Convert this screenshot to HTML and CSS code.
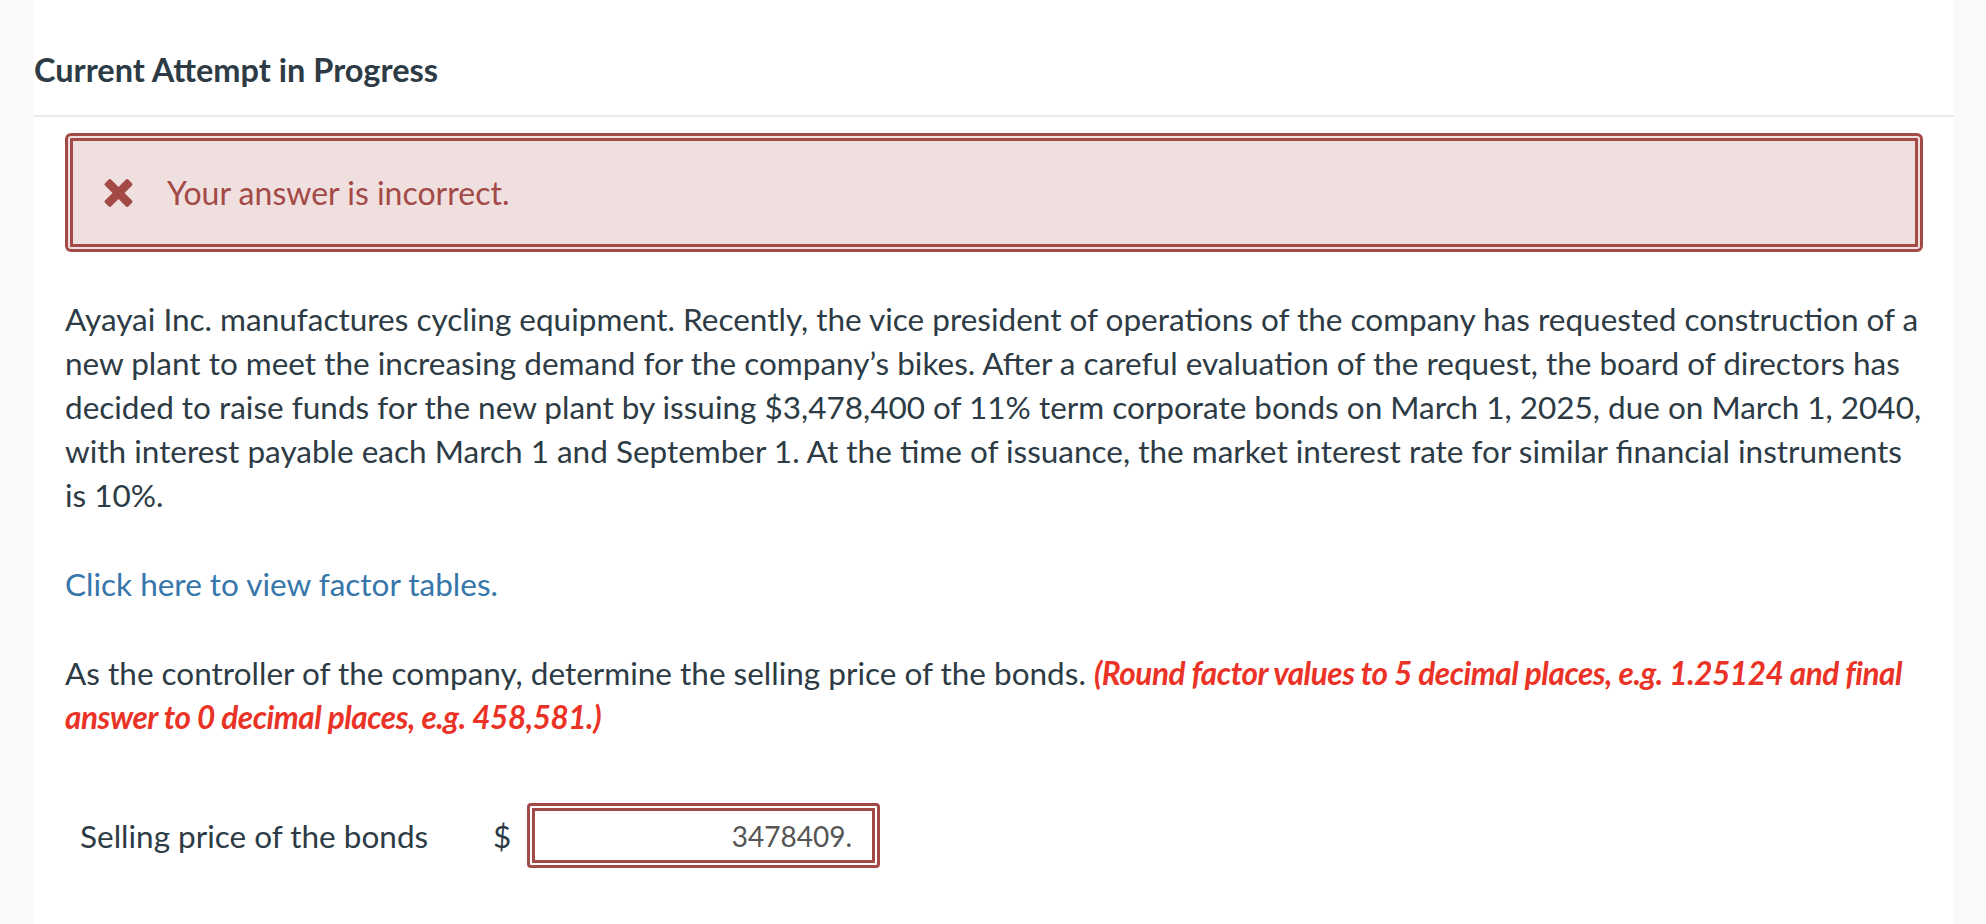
FILE: index.html
```html
<!DOCTYPE html>
<html lang="en">
<head>
<meta charset="utf-8">
<title>Current Attempt in Progress</title>
<link rel="stylesheet" href="styles.css">
</head>
<body>
<main class="page">
  <header class="attempt-header">
    <h2 class="attempt-title">Current Attempt in Progress</h2>
  </header>
  <section class="content">
    <div class="feedback">
      <svg class="feedback-icon" viewBox="0 0 29 28" aria-hidden="true">
        <rect x="-2" y="9.75" width="33" height="8.5" rx="2" transform="rotate(45 14.5 14)"></rect>
        <rect x="-2" y="9.75" width="33" height="8.5" rx="2" transform="rotate(-45 14.5 14)"></rect>
      </svg>
      <span class="feedback-text">Your answer is incorrect.</span>
    </div>

    <p class="question">Ayayai Inc. manufactures cycling equipment. Recently, the vice president of operations of the company has requested construction of a new plant to meet the increasing demand for the company’s bikes. After a careful evaluation of the request, the board of directors has decided to raise funds for the new plant by issuing $3,478,400 of 11% term corporate bonds on March 1, 2025, due on March 1, 2040, with interest payable each March 1 and September 1. At the time of issuance, the market interest rate for similar financial instruments is 10%.</p>

    <p class="question"><a class="factor-link" href="#">Click here to view factor tables.</a></p>

    <p class="question">As the controller of the company, determine the selling price of the bonds. <em class="hint">(Round factor values to 5 decimal places, e.g. 1.25124 and final answer to 0 decimal places, e.g. 458,581.)</em></p>

    <div class="answer-row">
      <span class="answer-label">Selling price of the bonds</span>
      <span class="currency">$</span>
      <input class="answer-input" type="text" value="3478409." readonly>
    </div>
  </section>
</main>
</body>
</html>
```

FILE: styles.css
```css
html, body {
  margin: 0;
  padding: 0;
  height: 100%;
}

body {
  background: #f9f9f9;
  font-family: "Lato", "Noto Sans", "Liberation Sans", sans-serif;
  color: #2d3b45;
}

.page {
  background: #ffffff;
  margin: 0 32px 0 34px;
  min-height: 100%;
  box-sizing: border-box;
}

.attempt-header {
  padding: 52px 0 27px 0;
  border-bottom: 2px solid #ececec;
}

.attempt-title {
  margin: 0;
  font-size: 32.5px;
  line-height: 36px;
  font-weight: 700;
  color: #2d3b45;
}

.content {
  padding: 16px 31px 0 31px;
}

.feedback {
  display: flex;
  align-items: center;
  height: 119px;
  box-sizing: border-box;
  border: 8px double #a34a46;
  border-radius: 6px;
  background: #efdfdf;
  padding-left: 31px;
  gap: 34px;
}

.feedback-icon {
  width: 29px;
  height: 28px;
  fill: #a34a46;
  flex: none;
}

.feedback-text {
  font-size: 32px;
  color: #a34a46;
}

.question {
  margin: 45px 0 0 0;
  font-size: 31.5px;
  line-height: 44px;
}

.factor-link {
  color: #3676ab;
  text-decoration: none;
}

.hint {
  color: #ea3326;
  font-weight: 700;
  font-style: italic;
  letter-spacing: -0.45px;
}

.answer-row {
  display: flex;
  align-items: center;
  margin-top: 64px;
  padding-left: 15px;
}

.answer-label {
  width: 413px;
  font-size: 31.5px;
}

.currency {
  width: 34px;
  font-size: 31.5px;
}

.answer-input {
  width: 353px;
  height: 65px;
  box-sizing: border-box;
  border: 8px double #a34a46;
  border-radius: 4px;
  padding: 0 20px 0 0;
  margin: 0;
  text-align: right;
  font-family: "Lato", "Noto Sans", "Liberation Sans", sans-serif;
  font-size: 28px;
  color: #555555;
  background: #ffffff;
  outline: none;
}
```
